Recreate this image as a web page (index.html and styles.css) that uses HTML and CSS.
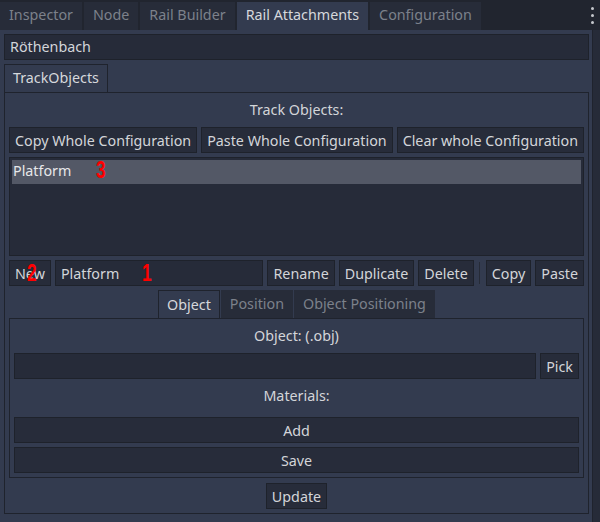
FILE: index.html
```html
<!DOCTYPE html>
<html lang="en">
<head>
<meta charset="utf-8">
<title>Rail Attachments</title>
<link rel="stylesheet" href="styles.css">
</head>
<body>
<div class="app">
  <div class="tabbar">
    <div class="tab">Inspector</div>
    <div class="tab">Node</div>
    <div class="tab">Rail Builder</div>
    <div class="tab active">Rail Attachments</div>
    <div class="tab">Configuration</div>
    <div class="dots"><span></span><span></span><span></span></div>
  </div>
  <div class="main">
    <div class="field title-field">Röthenbach</div>
    <div class="tabrow left">
      <div class="ptab active">TrackObjects</div>
    </div>
    <div class="panel outer">
      <div class="label">Track Objects:</div>
      <div class="row">
        <div class="btn grow">Copy Whole Configuration</div>
        <div class="btn grow">Paste Whole Configuration</div>
        <div class="btn grow">Clear whole Configuration</div>
      </div>
      <div class="list">
        <div class="item selected">Platform<span class="mark m3">3</span></div>
      </div>
      <div class="row">
        <div class="btn rel">New<span class="mark m2">2</span></div>
        <div class="field grow rel">Platform<span class="mark m1">1</span></div>
        <div class="btn">Rename</div>
        <div class="btn">Duplicate</div>
        <div class="btn">Delete</div>
        <div class="vsep"></div>
        <div class="btn">Copy</div>
        <div class="btn">Paste</div>
      </div>
      <div class="tabrow center">
        <div class="ptab active">Object</div>
        <div class="ptab">Position</div>
        <div class="ptab">Object Positioning</div>
      </div>
      <div class="panel inner">
        <div class="label">Object: (.obj)</div>
        <div class="row">
          <div class="field grow"></div>
          <div class="btn">Pick</div>
        </div>
        <div class="label tall">Materials:</div>
        <div class="btn wide">Add</div>
        <div class="btn wide">Save</div>
      </div>
      <div class="centerrow">
        <div class="btn">Update</div>
      </div>
    </div>
  </div>
</div>
</body>
</html>
```

FILE: styles.css
```css
* { box-sizing: border-box; }

html, body {
  margin: 0;
  padding: 0;
}

body {
  width: 600px;
  height: 522px;
  overflow: hidden;
  background: #262b38;
  font-family: "Noto Sans", "DejaVu Sans", sans-serif;
  font-size: 14.3px;
  color: #d3d5d9;
}

.app {
  display: flex;
  flex-direction: column;
  height: 522px;
}

.tabbar {
  height: 30px;
  display: flex;
  align-items: flex-end;
  gap: 2px;
  background: #21252f;
}

.tab {
  height: 28px;
  line-height: 26px;
  padding: 0 9px;
  background: #272c39;
  color: #7c818b;
  white-space: nowrap;
}

.tab.active {
  background: #333b4f;
  color: #d6d8dc;
}

.dots {
  margin-left: auto;
  width: 9px;
  height: 30px;
  display: flex;
  flex-direction: column;
  align-items: flex-start;
  gap: 4px;
  padding-top: 7px;
}

.dots span {
  width: 3px;
  height: 3px;
  border-radius: 50%;
  background: #c4c7cc;
}

.main {
  width: 593px;
  flex: 1;
  background: #333b4f;
  border-right: 1px solid #1f232d;
  padding: 4px 4px 0 4px;
  display: flex;
  flex-direction: column;
  gap: 4px;
}

.field {
  height: 26px;
  line-height: 26px;
  padding: 0 5px;
  background: #262b39;
  border: 1px solid #1e222b;
  color: #d3d5d9;
  white-space: nowrap;
  overflow: visible;
}

.title-field {
  width: 585px;
  line-height: 24px;
}

.tabrow {
  display: flex;
  height: 28px;
}

.tabrow.left { margin-bottom: -4px; }

.tabrow.center {
  justify-content: center;
  gap: 1px;
}

.ptab {
  height: 28px;
  line-height: 28px;
  padding: 0 9px;
  background: #272c39;
  color: #7c818b;
  white-space: nowrap;
}

.ptab.active {
  background: #333b4f;
  color: #d6d8dc;
  border: 1px solid #1f232d;
  border-bottom: none;
  padding: 0 8px;
  line-height: 27px;
}

.tabrow.left .ptab.active {
  line-height: 25px;
}

.panel {
  border: 1px solid #1f232d;
  background: #333b4f;
  padding: 4px;
  display: flex;
  flex-direction: column;
  gap: 4px;
}

.panel.outer {
  width: 585px;
  height: 422px;
}

.panel.inner {
  margin-top: -4px;
  height: 160px;
}

.label {
  height: 26px;
  line-height: 26px;
  text-align: center;
  color: #d3d5d9;
}

.label.tall {
  height: 30px;
  line-height: 26px;
}

.row {
  display: flex;
  gap: 4px;
  height: 26px;
}

.btn {
  height: 26px;
  line-height: 25px;
  padding: 0 5px;
  background: #272c3a;
  border: 1px solid #1e222b;
  color: #d3d5d9;
  text-align: center;
  white-space: nowrap;
}

.btn.grow { flex: 1 1 auto; }
.field.grow { flex: 1 1 auto; }

.btn.wide {
  width: 100%;
  flex: none;
}

.rel { position: relative; }

.vsep {
  width: 4px;
  display: flex;
  justify-content: center;
}

.vsep::before {
  content: "";
  width: 1px;
  margin: 2px 0;
  background: #262b37;
}

.list {
  height: 100px;
  background: #262b39;
  border: 1px solid #1e222b;
  padding: 2px;
}

.item {
  position: relative;
  height: 24px;
  line-height: 22px;
  padding: 0 1px;
  color: #e6e7e9;
}

.item.selected {
  background: #535866;
}

.centerrow {
  display: flex;
  justify-content: center;
  margin-top: 1px;
}

.mark {
  position: absolute;
  font-family: "Liberation Sans", sans-serif;
  font-weight: bold;
  font-size: 23px;
  line-height: 23px;
  color: #ff0000;
  transform: scaleX(0.75);
  transform-origin: left top;
}

.m3 { left: 84px; top: -1px; }
.m2 { left: 17px; top: 1px; }
.m1 { left: 86px; top: 1px; }
```
